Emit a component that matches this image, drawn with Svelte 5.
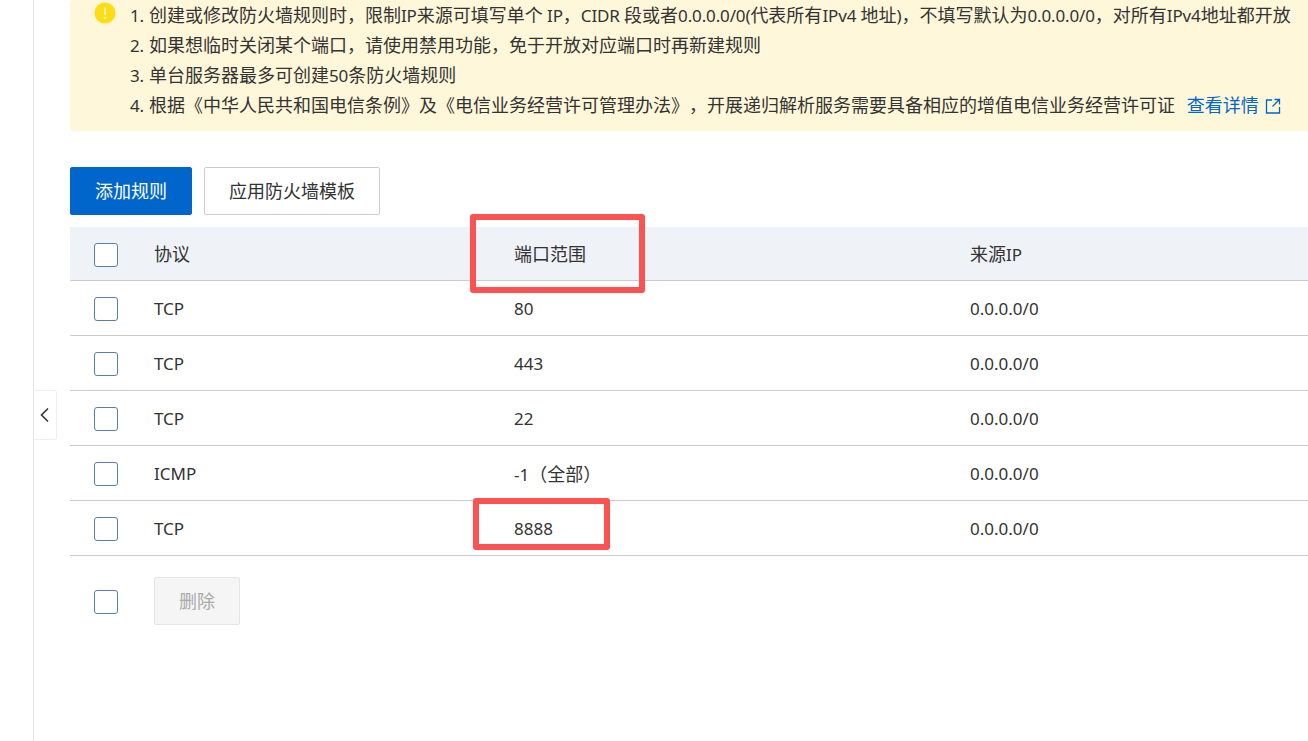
<script lang="ts">
  const tips = [
    '创建或修改防火墙规则时，限制IP来源可填写单个 IP，CIDR 段或者0.0.0.0/0(代表所有IPv4 地址)，不填写默认为0.0.0.0/0，对所有IPv4地址都开放',
    '如果想临时关闭某个端口，请使用禁用功能，免于开放对应端口时再新建规则',
    '单台服务器最多可创建50条防火墙规则',
    '根据《中华人民共和国电信条例》及《电信业务经营许可管理办法》，开展递归解析服务需要具备相应的增值电信业务经营许可证',
  ];
  const rules = [
    { proto: 'TCP', port: '80', source: '0.0.0.0/0' },
    { proto: 'TCP', port: '443', source: '0.0.0.0/0' },
    { proto: 'TCP', port: '22', source: '0.0.0.0/0' },
    { proto: 'ICMP', port: '-1（全部）', source: '0.0.0.0/0' },
    { proto: 'TCP', port: '8888', source: '0.0.0.0/0' },
  ];

  // latin runs sit a size below the CJK text, same ratio as the original UI font
  const runs = (text: string) =>
    text.split(/([\x00-\x7f]+)/).filter(Boolean).map((t) => ({ t, latin: t.charCodeAt(0) < 128 }));
</script>

{#snippet mixed(text: string)}
  {#each runs(text) as run}<span class:latin={run.latin}>{run.t}</span>{/each}
{/snippet}

<div class="page">
  <aside class="side"></aside>
  <button class="collapse" aria-label="收起">
    <svg width="10" height="16" viewBox="0 0 10 16" fill="none" stroke="#333" stroke-width="1.6">
      <path d="M8 1.500 1.500 8 8 14.500" />
    </svg>
  </button>

  <main class="main">
    <section class="notice">
      <svg class="warn" width="22" height="22" viewBox="0 0 22 22">
        <circle cx="11" cy="11" r="10.500" fill="#ffdc14" />
        <rect x="10" y="5.500" width="2" height="7.500" rx="1" fill="#fff6c4" />
        <circle cx="11" cy="16" r="1.200" fill="#fff6c4" />
      </svg>
      <ol class="tips">
        {#each tips as tip, i}
          <li>
            <span class="latin num">{i + 1}.</span>{@render mixed(tip)}
            {#if i === 3}
              <a class="more" href="#more">查看详情
                <svg width="16" height="16" viewBox="0 0 16 16" fill="none" stroke="#0066cc" stroke-width="1.300">
                  <path d="M7 2H1.500v13h13V9M9.500 1.500h5v5M14.500 1.500 7.500 8.500" />
                </svg>
              </a>
            {/if}
          </li>
        {/each}
      </ol>
    </section>

    <div class="actions">
      <button class="btn primary">添加规则</button>
      <button class="btn outline">应用防火墙模板</button>
    </div>

    <div class="table">
      <div class="row head">
        <span class="check"></span>
        <span>协议</span>
        <span>端口范围</span>
        <span>{@render mixed('来源IP')}</span>
      </div>
      {#each rules as rule}
        <div class="row">
          <span class="check"></span>
          <span>{@render mixed(rule.proto)}</span>
          <span>{@render mixed(rule.port)}</span>
          <span>{@render mixed(rule.source)}</span>
        </div>
      {/each}
    </div>

    <div class="footer">
      <span class="check"></span>
      <button class="btn disabled" disabled>删除</button>
    </div>
  </main>

  <div class="mark mark-head"></div>
  <div class="mark mark-port"></div>
</div>

<style>
  :global(body) {
    margin: 0;
    background: #fff;
    overflow: hidden;
  }
  .page {
    position: relative;
    display: flex;
    width: 1308px;
    height: 741px;
    overflow: hidden;
    font-family: "Noto Sans", "Noto Sans CJK SC", sans-serif;
    font-size: 18px;
    color: #333;
    text-spacing-trim: space-all;
  }
  .latin {
    font-size: 17px;
  }
  .side {
    flex: 0 0 33px;
    border-right: 1px solid #e5e5e5;
  }
  .collapse {
    position: absolute;
    left: 34px;
    top: 390px;
    width: 23px;
    height: 50px;
    padding: 0;
    display: flex;
    align-items: center;
    justify-content: center;
    background: #fff;
    border: 1px solid #eee;
    border-left: none;
    border-radius: 0 3px 3px 0;
  }
  .main {
    flex: 1;
    min-width: 0;
    padding-left: 36px;
  }
  .notice {
    display: flex;
    height: 131px;
    box-sizing: border-box;
    margin-right: -20px;
    background: #fff7d9;
    border-radius: 3px;
  }
  .warn {
    flex: none;
    margin: 2px 0 0 24px;
  }
  .tips {
    list-style: none;
    margin: 0 0 0 14px;
    padding: 0;
    line-height: 30px;
    white-space: nowrap;
  }
  .tips li {
    height: 30px;
  }
  .tips .latin {
    letter-spacing: -0.14px;
  }
  .tips .num {
    margin-right: 5px;
  }
  .more {
    margin-left: 7px;
    color: #0066cc;
    text-decoration: none;
  }
  .more svg {
    vertical-align: -2px;
    margin-left: 2px;
  }
  .actions {
    display: flex;
    gap: 12px;
    margin-top: 36px;
  }
  .btn {
    height: 48px;
    padding: 0 0 2px;
    font: inherit;
    border-radius: 2px;
    box-sizing: border-box;
  }
  .primary {
    width: 122px;
    background: #0066cc;
    border: 1px solid #0066cc;
    color: #fff;
  }
  .outline {
    width: 176px;
    background: #fff;
    border: 1px solid #ccc;
    color: #333;
  }
  .table {
    margin-top: 12px;
    margin-right: -20px;
  }
  .row {
    display: grid;
    grid-template-columns: 84px 360px 456px 1fr;
    align-items: center;
    height: 55px;
    box-sizing: border-box;
    border-bottom: 1px solid #ccc;
  }
  .head {
    height: 54px;
    padding-bottom: 2px;
    background: #eff2f7;
  }
  .check {
    display: block;
    width: 24px;
    height: 24px;
    box-sizing: border-box;
    margin: 2px 0 0 24px;
    background: #fff;
    border: 1px solid #5b7fa3;
    border-radius: 3px;
  }
  .head .check {
    margin-top: 4px;
  }
  .footer {
    display: grid;
    grid-template-columns: 84px auto;
    justify-content: start;
    align-items: center;
    margin-top: 21px;
  }
  .footer .check {
    margin-top: 2px;
  }
  .disabled {
    width: 86px;
    background: #f5f5f5;
    border: 1px solid #e5e5e5;
    color: #aaa;
  }
  .mark {
    position: absolute;
    box-sizing: border-box;
    border: 6px solid #fd5252;
    border-radius: 3px;
  }
  .mark-head {
    left: 470px;
    top: 214px;
    width: 175px;
    height: 79px;
  }
  .mark-port {
    left: 473px;
    top: 498px;
    width: 137px;
    height: 52px;
  }
</style>
